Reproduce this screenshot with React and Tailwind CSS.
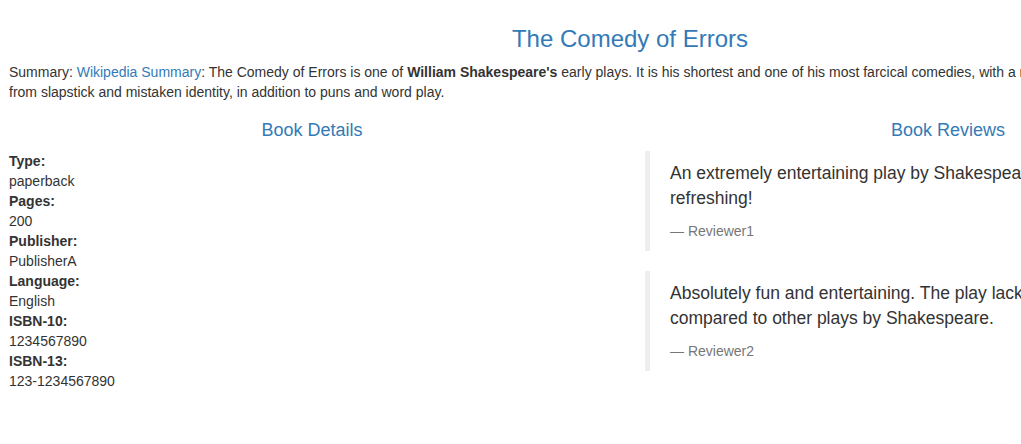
export default function App() {
  const details = [
    ['Type:', 'paperback'],
    ['Pages:', '200'],
    ['Publisher:', 'PublisherA'],
    ['Language:', 'English'],
    ['ISBN-10:', '1234567890'],
    ['ISBN-13:', '123-1234567890'],
  ]
  const reviews = [
    { text: 'An extremely entertaining play by Shakespeare. The slapstick humour is refreshing!', who: 'Reviewer1' },
    { text: 'Absolutely fun and entertaining. The play lacks thematic depth when compared to other plays by Shakespeare.', who: 'Reviewer2' },
  ]

  return (
    <div className="w-[1021px] h-[444px] overflow-hidden bg-white font-['Liberation_Sans',Arial,sans-serif] text-[14px] leading-[20px] text-[#333]">
      <div className="w-[1272px] ml-[-6px] px-[15px] pt-[26px]">
        <h3 className="text-center text-[24px] leading-[26.4px] text-[#337ab7] mb-[10px]">The Comedy of Errors</h3>
        <p className="mb-[10px]">
          Summary: <a href="#" className="text-[#337ab7]">Wikipedia Summary</a>: The Comedy of Errors is one of{' '}
          <b>William Shakespeare's</b> early plays. It is his shortest and one of his most farcical comedies, with a major part
          of the humour coming from slapstick and mistaken identity, in addition to puns and word play.
        </p>

        <div className="grid grid-cols-2 gap-[30px] mt-[19px]">
          <div>
            <h4 className="text-center text-[18px] leading-[19.8px] text-[#337ab7] mb-[10px]">Book Details</h4>
            <dl>
              {details.map(([k, v]) => (
                <div key={k}>
                  <dt className="font-bold">{k}</dt>
                  <dd>{v}</dd>
                </div>
              ))}
            </dl>
          </div>

          <div>
            <h4 className="text-center text-[18px] leading-[19.8px] text-[#337ab7] mb-[10px]">Book Reviews</h4>
            {reviews.map(r => (
              <blockquote key={r.who} className="border-l-[5px] border-[#eee] px-[20px] py-[10px] mb-[20px] text-[17.5px] leading-[25px]">
                <p className="mb-[10px]">{r.text}</p>
                <footer className="text-[14px] leading-[20px] text-[#777]">{'\u2014\u00a0'}{r.who}</footer>
              </blockquote>
            ))}
          </div>
        </div>
      </div>
    </div>
  )
}
